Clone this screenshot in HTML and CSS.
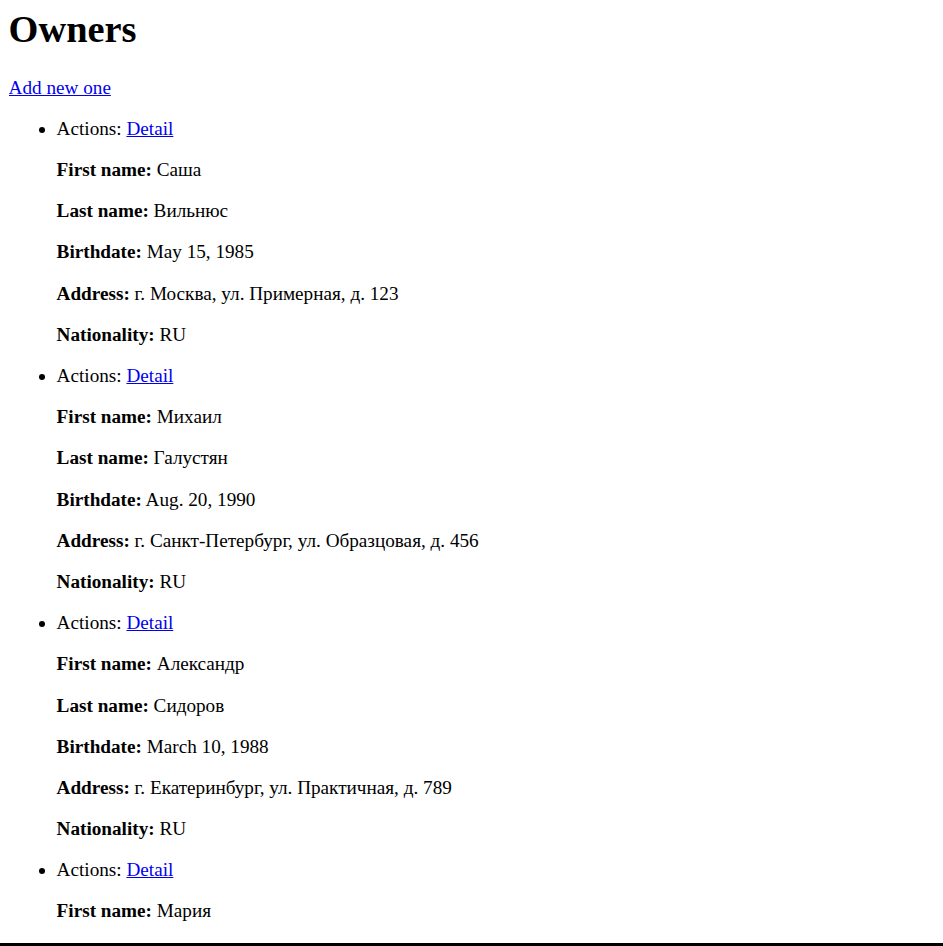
FILE: index.html
```html
<!DOCTYPE html>
<html lang="en">
<head>
<meta charset="utf-8">
<title>Owners</title>
<link rel="stylesheet" href="styles.css">
</head>
<body>
<h1 class="title">Owners</h1>
<p class="para"><a class="link" href="#">Add new one</a></p>
<ul class="owners">
  <li class="owner">Actions: <a class="link" href="#">Detail</a>
    <p class="para"><strong>First name:</strong> Саша</p>
    <p class="para"><strong>Last name:</strong> Вильнюс</p>
    <p class="para"><strong>Birthdate:</strong> May 15, 1985</p>
    <p class="para"><strong>Address:</strong> г. Москва, ул. Примерная, д. 123</p>
    <p class="para"><strong>Nationality:</strong> RU</p>
  </li>
  <li class="owner">Actions: <a class="link" href="#">Detail</a>
    <p class="para"><strong>First name:</strong> Михаил</p>
    <p class="para"><strong>Last name:</strong> Галустян</p>
    <p class="para"><strong>Birthdate:</strong> Aug. 20, 1990</p>
    <p class="para"><strong>Address:</strong> г. Санкт-Петербург, ул. Образцовая, д. 456</p>
    <p class="para"><strong>Nationality:</strong> RU</p>
  </li>
  <li class="owner">Actions: <a class="link" href="#">Detail</a>
    <p class="para"><strong>First name:</strong> Александр</p>
    <p class="para"><strong>Last name:</strong> Сидоров</p>
    <p class="para"><strong>Birthdate:</strong> March 10, 1988</p>
    <p class="para"><strong>Address:</strong> г. Екатеринбург, ул. Практичная, д. 789</p>
    <p class="para"><strong>Nationality:</strong> RU</p>
  </li>
  <li class="owner">Actions: <a class="link" href="#">Detail</a>
    <p class="para"><strong>First name:</strong> Мария</p>
  </li>
</ul>
<div class="frame-edge"></div>
</body>
</html>
```
FILE: styles.css
```css
html {
  overflow: hidden;
}
body {
  margin: 0 9.6px 9.6px 8.6px;
  font-family: "Liberation Serif", "Times New Roman", serif;
  font-size: 19.2px;
  color: #000;
  background: #fff;
}
.title {
  font-size: 38.4px;
  font-weight: bold;
  margin: 7px 0 25.7px 0;
}
.para {
  margin: 19.2px 0;
}
.link {
  color: #0000ee;
  text-decoration: underline;
}
.owners {
  margin: 19.2px 0;
  padding-left: 48px;
  list-style: disc;
}
.frame-edge {
  position: fixed;
  left: 0;
  right: 0;
  bottom: 0;
  height: 3px;
  background: #000;
}
```
